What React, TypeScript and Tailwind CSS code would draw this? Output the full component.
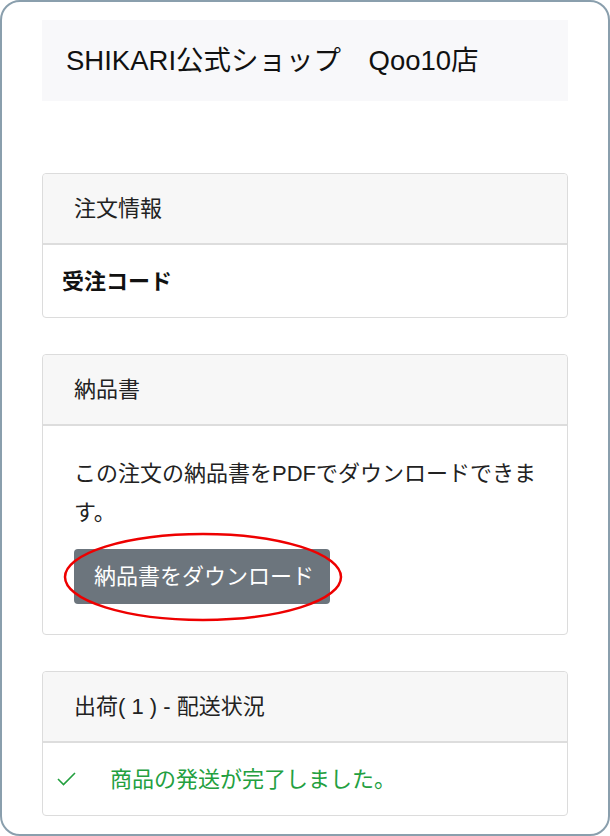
import React from "react";

const font = { fontFamily: '"Liberation Sans", "Noto Sans CJK JP", sans-serif' };

function Card({ title, children, bodyClass }: { title: string; children: React.ReactNode; bodyClass: string }) {
  return (
    <div className="rounded-[4px] border border-[#dcdcdc] bg-white">
      <div className="flex h-[71px] items-center rounded-t-[4px] border-b-2 border-[#dddddd] bg-[#f7f7f7] pl-[31px] text-[22px] text-[#222]">
        {title}
      </div>
      <div className={bodyClass}>{children}</div>
    </div>
  );
}

export default function App() {
  return (
    <div className="h-[836px] w-[610px] bg-white" style={font}>
      <div className="h-[836px] w-[610px] overflow-hidden rounded-[20px] border-2 border-[#8a9fad] bg-white px-[40px] pt-[18px]">
        <div className="flex h-[81px] items-center bg-[#f8f8fa] pl-[24px] text-[27.5px] text-[#111]">
          SHIKARI公式ショップ　Qoo10店
        </div>
        <div className="mt-[72px] flex flex-col gap-[36px]">
          <Card title="注文情報" bodyClass="flex h-[72px] items-center pl-[19px] text-[22px] font-bold text-[#111]">
            受注コード
          </Card>
          <Card title="納品書" bodyClass="px-[31px] pt-[28px] pb-[30px] text-[22px] leading-[39px] text-[#222]">
            <p>この注文の納品書をPDFでダウンロードできます。</p>
            <div className="relative mt-[17px] w-fit">
              <button className="flex h-[55px] w-[256px] items-center rounded-[4px] bg-[#6c757d] pl-[20px] text-[22px] text-white">
                納品書をダウンロード
              </button>
              <svg className="pointer-events-none absolute left-[-11px] top-[-17px]" width="282" height="90" viewBox="0 0 282 90">
                <ellipse cx="140" cy="45" rx="138" ry="43" fill="none" stroke="#ee0000" strokeWidth="2.5" />
              </svg>
            </div>
          </Card>
          <Card title="出荷( 1 ) - 配送状況" bodyClass="flex h-[72px] items-center pl-[14px] text-[22px] text-[#23a03f]">
            <svg width="19" height="14" viewBox="0 0 19 14" className="mr-[34px]">
              <path d="M1 7 L6.5 12.5 L18 1" fill="none" stroke="#23a03f" strokeWidth="1.6" />
            </svg>
            商品の発送が完了しました。
          </Card>
        </div>
      </div>
    </div>
  );
}
